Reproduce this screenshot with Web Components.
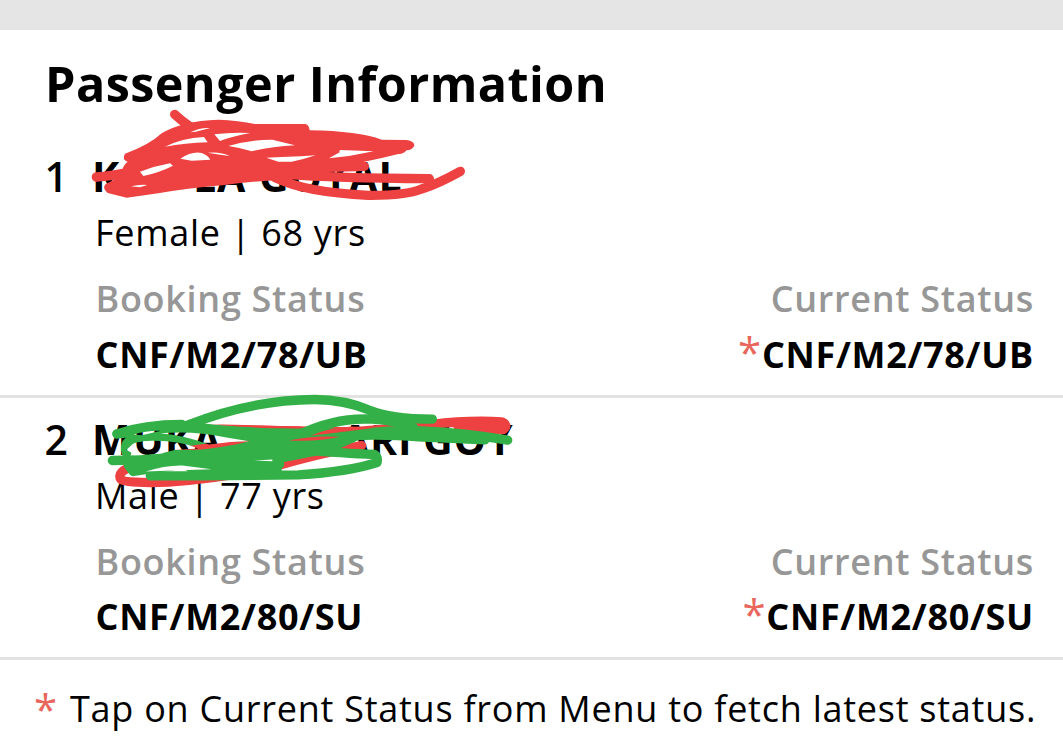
<!DOCTYPE html>
<html lang="en">
<head>
    <meta charset="UTF-8">
    <meta name="viewport" content="width=device-width, initial-scale=1.0">
    <title>Passenger Information</title>
    <style>
        body {
            margin: 0;
            background: #fff;
            color: #000;
            font-family: "Open Sans", sans-serif;
        }
    </style>
</head>
<body>

<template id="ticket-page-template">
    <style>
        :host {
            display: block;
            height: 756px;
            overflow: hidden;
            border-top: 30px solid #e5e5e5;
            box-sizing: border-box;
        }

        h1 {
            margin: 0;
            padding: 23px 45px 22px;
            font-size: 48.5px;
            line-height: 60px;
            font-weight: 700;
            letter-spacing: 0.45px;
            white-space: nowrap;
        }
    </style>
    <h1><slot name="title"></slot></h1>
    <slot></slot>
</template>

<template id="passenger-row-template">
    <style>
        :host {
            display: grid;
            grid-template-columns: 92px 1fr;
            position: relative;
            box-sizing: border-box;
            height: 262.5px;
            padding: 13px 29px 0 0;
            border-bottom: 3px solid #e3e3e3;
            line-height: 56px;
            white-space: nowrap;
        }

        .number {
            padding-left: 44.5px;
            font-size: 41px;
            font-weight: 600;
        }

        .name {
            display: flex;
            height: 57px;
            font-size: 41px;
            font-weight: 700;
        }

        .info {
            padding-left: 3px;
            font-size: 36px;
            letter-spacing: 0.7px;
        }

        .statuses {
            display: flex;
            justify-content: space-between;
            padding-top: 10px;
        }
    </style>
    <div class="number"></div>
    <div>
        <div class="name"><slot name="name"></slot></div>
        <div class="info"><slot name="info"></slot></div>
        <div class="statuses"><slot name="status"></slot></div>
    </div>
    <slot name="marker"></slot>
</template>

<template id="booking-status-template">
    <style>
        :host {
            display: block;
            padding-left: 3.5px;
            font-size: 36px;
            line-height: 56px;
        }

        :host([align="right"]) {
            text-align: right;
        }

        .label {
            height: 55.9px;
            color: #979797;
            font-weight: 600;
            letter-spacing: 0.7px;
        }

        .value {
            height: 56px;
            font-weight: 700;
            letter-spacing: 0.7px;
        }

        .star {
            color: #e9665c;
            font-size: 42px;
            line-height: 1;
            font-weight: 400;
        }
    </style>
    <div class="label"></div>
    <div class="value"><span class="star"></span><slot></slot></div>
</template>

<template id="marker-scribble-template">
    <style>
        :host {
            position: absolute;
            left: 0;
            top: 0;
            z-index: 1;
        }

        svg {
            display: block;
            overflow: visible;
            fill: none;
            stroke-width: 28;
            stroke-linecap: round;
            stroke-linejoin: round;
        }
    </style>
    <svg width="540" height="100"></svg>
</template>

<template id="foot-note-template">
    <style>
        :host {
            display: flex;
            padding: 21px 0 0 34px;
            font-size: 36px;
            line-height: 56px;
            letter-spacing: 0.75px;
            white-space: nowrap;
        }

        .star {
            width: 36px;
            color: #e9665c;
            font-size: 42px;
        }
    </style>
    <span class="star">*</span>
    <span><slot></slot></span>
</template>

<script>
    const RED = '#ee4141';
    const GREEN = '#34b048';

    // Marker drawings, three units to a pixel: a list of [stroke, fill, path] painted
    // in order, and the gaps between the strokes where the row shows through
    const SCRIBBLES = {
        red: {
            viewBox: '-255 90 1620 300',
            shapes: [
                ['none', RED, 'M120 146 Q190 122 230 85 Q290 48 400 44 Q460 46 510 57 L660 57 Q672 58 674 76 Q820 78 890 104 L965 105 Q988 108 988 122 Q982 134 965 136 Q955 148 940 147 Q850 170 730 190 L620 210 L590 226 Q500 228 420 240 Q300 250 220 265 L125 278 L68 264 Q50 250 62 237 L92 222 L110 200 Q116 178 128 170 Q110 165 120 146 Z'],
                [RED, 'none', 'M269 28 Q310 66 360 90'],
                [RED, 'none', 'M34 216 Q80 214 140 200'],
                [RED, 'none', 'M620 190 L838 184'],
                [RED, 'none', 'M600 208 Q750 219 1033 221'],
                [RED, 'none', 'M570 218 Q660 262 850 271 Q960 272 1010 252 Q1060 236 1126 199']
            ],
            gaps: [
                'M316 82 Q345 67 376 69 L332 80 Z',
                'M240 125 Q290 100 357 96 L368 112 Q300 114 240 125 Z',
                'M388 88 Q440 81 496 84 Q440 94 405 108 Z',
                'M430 123 Q500 103 562 104 L630 121 Q560 125 500 139 Q465 128 430 123 Z',
                'M286 161 Q320 138 350 144 Q368 150 376 164 L320 167 Z',
                'M368 143 Q410 140 434 153 Q400 148 368 143 Z',
                'M165 200 Q210 183 255 175 L264 182 Q225 202 175 213 Z',
                'M138 244 Q165 237 187 240 L165 247 Z',
                'M544 158 Q600 157 692 151 Q660 162 620 170 L580 170 Z',
                'M764 142 Q762 136 766 135 L866 139 Q800 154 732 160 Z'
            ]
        },
        green: {
            viewBox: '-255 22.5 1620 300',
            shapes: [
                [RED, 'none', 'M145 228 Q95 242 107 266 Q120 280 250 275 Q420 262 560 230 Q700 190 830 165'],
                [RED, 'none', 'M300 116 Q600 120 800 124 Q930 115 1040 102 Q1150 88 1250 94 Q1272 104 1255 117 L1120 112'],
                [GREEN, 'none', 'M96 130 Q180 102 290 102'],
                [GREEN, GREEN, 'M290 104 Q400 122 560 127 L680 127 L830 128 Q770 160 710 178 L580 204 L300 215 L240 200 L340 175 L270 150 L200 130 Z'],
                [GREEN, 'none', 'M310 103 Q500 28 690 27 Q780 28 850 58 Q920 86 1042 86'],
                [GREEN, 'none', 'M640 134 Q750 80 860 86 Q920 88 985 110'],
                [GREEN, 'none', 'M680 150 Q850 118 1010 121 Q1140 126 1268 149'],
                [GREEN, 'none', 'M700 140 Q880 128 1000 139 L1200 148'],
                [GREEN, 'none', 'M96 130 Q190 122 320 128'],
                [GREEN, 'none', 'M150 142 Q112 155 125 188'],
                [GREEN, 'none', 'M150 142 Q230 130 300 156 L360 176'],
                [GREEN, 'none', 'M82 210 Q250 210 400 180'],
                [GREEN, GREEN, 'M130 224 L240 204 L580 200 L580 224 L300 220 L145 243 Z'],
                [GREEN, 'none', 'M196 256 Q400 256 640 253 Q790 244 876 216 Q880 200 868 192 Q780 188 640 178'],
                [GREEN, 'none', 'M380 230 Q480 232 560 228 L584 220'],
                ['none', GREEN, 'M400 225 L590 225 L590 245 L330 255 L300 238 Z'],
                ['none', RED, 'M250 178 Q360 154 495 151 Q440 168 340 178 Z'],
                ['none', RED, 'M612 150 Q690 134 765 139 Q700 154 612 150 Z'],
                ['none', RED, 'M380 101 Q520 104 650 108 L640 114 Q500 112 380 101 Z'],
                ['none', RED, 'M676 136 Q730 112 800 108 L870 112 Q780 124 676 136 Z']
            ],
            gaps: [
                'M146 132 Q190 119 228 121 L170 134 Z',
                'M225 128 Q330 120 420 140 L492 152 Q440 152 372 162 Q300 134 225 128 Z',
                'M124 178 Q150 150 205 151 Q290 152 340 174 L252 179 L152 194 Z',
                'M182 243 Q240 224 292 225 L380 236 Q280 238 182 243 Z',
                'M508 210 L562 207 L562 212 Z'
            ]
        }
    };

    class TemplateElement extends HTMLElement {
        constructor(templateId) {
            super();
            this.attachShadow({mode: 'open'});
            const template = document.getElementById(templateId);
            this.shadowRoot.appendChild(template.content.cloneNode(true));
        }
    }

    class TicketPage extends TemplateElement {
        constructor() {
            super('ticket-page-template');
        }
    }

    class PassengerRow extends TemplateElement {
        constructor() {
            super('passenger-row-template');
        }

        connectedCallback() {
            this.shadowRoot.querySelector('.number').textContent = this.getAttribute('number');
        }
    }

    class BookingStatus extends TemplateElement {
        constructor() {
            super('booking-status-template');
        }

        connectedCallback() {
            this.shadowRoot.querySelector('.label').textContent = this.getAttribute('label');
            if (this.hasAttribute('starred')) {
                this.shadowRoot.querySelector('.star').textContent = '*';
            }
        }
    }

    // Only the readable letters of a name are kept, each piece with its own width
    class NamePart extends HTMLElement {
        constructor() {
            super();
            this.attachShadow({mode: 'open'});
            this.shadowRoot.innerHTML = '<style>:host { display: block; letter-spacing: 0.8px; }</style><slot></slot>';
        }

        connectedCallback() {
            this.style.width = this.getAttribute('width') + 'px';
        }
    }

    class MarkerScribble extends TemplateElement {
        constructor() {
            super('marker-scribble-template');
        }

        connectedCallback() {
            const {viewBox, shapes, gaps} = SCRIBBLES[this.getAttribute('color')];
            const svg = this.shadowRoot.querySelector('svg');
            svg.setAttribute('viewBox', viewBox);
            svg.innerHTML = `
                <mask id="gaps" maskUnits="userSpaceOnUse" x="-50" y="-50" width="1500" height="450">
                    <rect x="-50" y="-50" width="1500" height="450" fill="white"/>
                    <path fill="black" stroke="none" d="${gaps.join(' ')}"/>
                </mask>
                <g mask="url(#gaps)">
                    ${shapes.map(([stroke, fill, d]) => `<path stroke="${stroke}" fill="${fill}" d="${d}"/>`).join('')}
                </g>`;
        }
    }

    class FootNote extends TemplateElement {
        constructor() {
            super('foot-note-template');
        }
    }

    customElements.define('ticket-page', TicketPage);
    customElements.define('passenger-row', PassengerRow);
    customElements.define('booking-status', BookingStatus);
    customElements.define('name-part', NamePart);
    customElements.define('marker-scribble', MarkerScribble);
    customElements.define('foot-note', FootNote);
</script>

<ticket-page>
    <span slot="title">Passenger Information</span>

    <passenger-row number="1">
        <name-part slot="name" width="101">K</name-part>
        <name-part slot="name" width="66">LA</name-part>
        <name-part slot="name" width="150">GOYAL</name-part>
        <span slot="info">Female | 68 yrs</span>
        <booking-status slot="status" label="Booking Status">CNF/M2/78/UB</booking-status>
        <booking-status slot="status" label="Current Status" align="right" starred>CNF/M2/78/UB</booking-status>
        <marker-scribble slot="marker" color="red"></marker-scribble>
    </passenger-row>

    <passenger-row number="2">
        <name-part slot="name" width="41">M</name-part>
        <name-part slot="name" width="208">UKA</name-part>
        <name-part slot="name" width="82">ARI</name-part>
        <name-part slot="name" width="100">GOY</name-part>
        <span slot="info">Male | 77 yrs</span>
        <booking-status slot="status" label="Booking Status">CNF/M2/80/SU</booking-status>
        <booking-status slot="status" label="Current Status" align="right" starred>CNF/M2/80/SU</booking-status>
        <marker-scribble slot="marker" color="green"></marker-scribble>
    </passenger-row>

    <foot-note>Tap on Current Status from Menu to fetch latest status.</foot-note>
</ticket-page>

</body>
</html>
